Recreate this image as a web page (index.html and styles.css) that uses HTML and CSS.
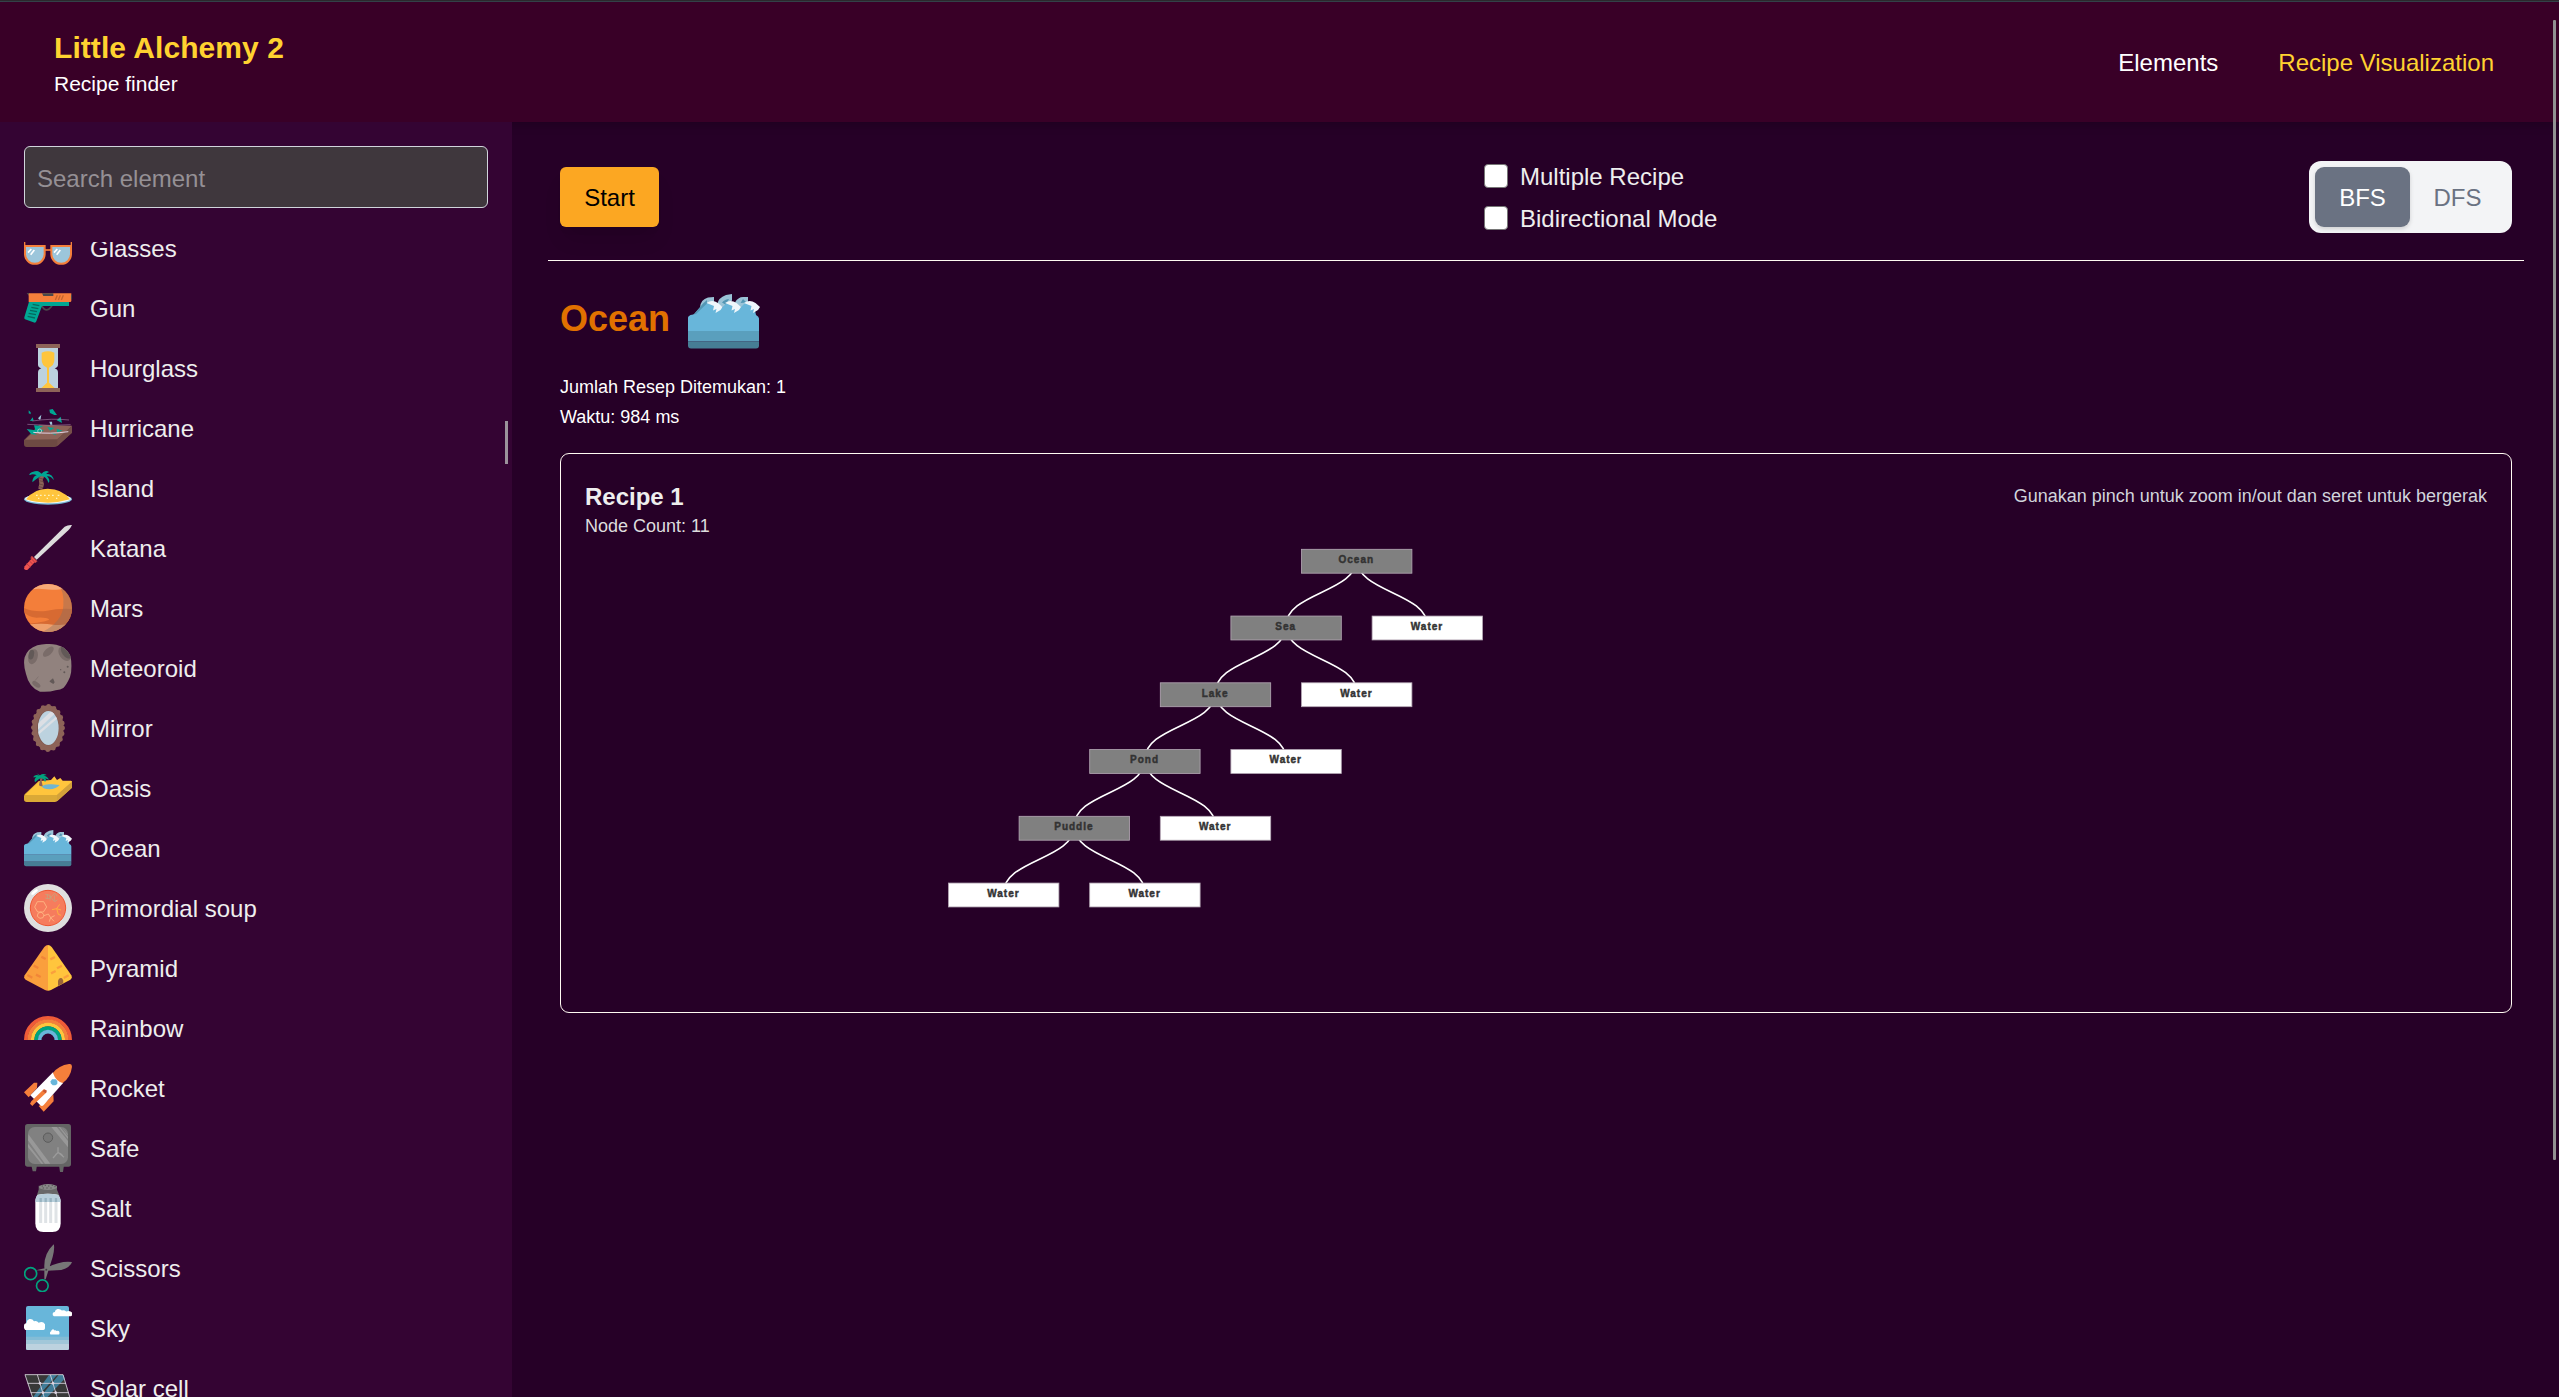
FILE: index.html
```html
<!DOCTYPE html>
<html lang="en">
<head>
<meta charset="utf-8">
<title>Little Alchemy 2 - Recipe finder</title>
<link rel="stylesheet" href="styles.css">
</head>
<body>
<div class="page">
<header class="header">
  <div class="brand">
    <div class="brand-title">Little Alchemy 2</div>
    <div class="brand-sub">Recipe finder</div>
  </div>
  <nav class="nav"><a>Elements</a><a class="current">Recipe Visualization</a></nav>
</header>
<div class="body">
  <aside class="sidebar">
    <input class="search" type="text" placeholder="Search element">
    <div class="list-view">
    <ul class="list">
      <li><svg viewBox="0 0 144 144"><path d="M2 34V84M142 34V84" stroke="#f57f3b" stroke-width="4"/><path d="M3 66H62V90A29 29 0 0 1 3 90ZM82 66H141V90A29 29 0 0 1 82 90Z" fill="#9cc6db" stroke="#f57f3b" stroke-width="6"/><path d="M62 78H82" stroke="#f57f3b" stroke-width="5"/><path d="M12 86L22 75M20 92L31 78M90 86L100 75M98 92L109 78" stroke="#fff" stroke-width="5"/></svg>Glasses</li>
      <li><svg viewBox="0 0 144 144"><path d="M48 56Q60 84 74 76L84 66" fill="none" stroke="#4a494b" stroke-width="5"/><path d="M8 27H18V40Z" fill="#4a494b"/><path d="M15 53H135V66H54L37 112Q35 118 28 115L3 106Q0 104 1 100Z" fill="#00a693"/><path d="M14 30Q14 28 18 28H142V50Q142 54 138 54H14Z" fill="#f57f3b"/><path d="M54 28H88V36H58ZM141 32H144V46H141Z" fill="#4a494b"/><path d="M94 48L100 34M103 48L109 34M112 48L118 34" stroke="#c4652f" stroke-width="4"/><path d="M26 61L46 65M22 70L43 74M18 79L39 83M14 88L36 92M11 97L33 102" stroke="#04695f" stroke-width="4"/></svg>Gun</li>
      <li><svg viewBox="0 0 144 144"><path d="M42 10H102V62Q102 70 92 73Q102 76 102 86V134H42V86Q42 76 52 73Q42 70 42 62Z" fill="#bcd2df"/><path d="M53 26Q72 18 91 26V48Q91 64 75 71V116L92 132H52L69 116V71Q53 64 53 48Z" fill="#ffc53d"/><path d="M36 0H108V12H36ZM36 132H108V144H36Z" fill="#8d6358"/></svg>Hourglass</li>
      <li><svg viewBox="0 0 144 144"><path d="M0 108L46 62L144 66V86L100 126Q96 129 90 129H8Q0 129 0 120Z" fill="#6d4a43"/><path d="M3 107L48 65H144L100 106Z" fill="#8d6358"/><path d="M100 106L144 68V86L100 126Z" fill="#765049"/><path d="M14 19L20 25V31L14 28ZM76 17L86 15L99 33L91 33L78 27ZM18 51L26 40L29 50ZM98 49L110 38L114 57ZM30 64L58 66L46 72L60 81L30 86L39 92L22 91L8 75L34 79ZM70 69L91 72L78 80ZM98 74L116 80L99 85ZM79 87L94 89L96 94Z" fill="#00a693"/><path d="M48 48L42 43L52 32L50 44ZM76 53H84L85 62H79Z" fill="#9cc6db"/><path d="M25 51Q85 42 135 48M10 61Q80 67 140 62" fill="none" stroke="#b898bd" stroke-width="1.500"/><path d="M28 85Q77 91 133 83" fill="none" stroke="#e2d1e4" stroke-width="3"/><circle cx="47" cy="81" r="6" fill="none" stroke="#ddd" stroke-width="2"/></svg>Hurricane</li>
      <li><svg viewBox="0 0 144 144"><ellipse cx="72" cy="106" rx="72" ry="16" fill="#73b5d3"/><ellipse cx="72" cy="104" rx="69" ry="14" fill="#f1f8fb"/><path d="M6 106Q29 74 71 74Q115 74 138 106Q105 116 72 116Q36 116 6 106Z" fill="#ffc53d"/><path d="M50 35L61 37L56 48L60 60L57 73Q50 78 43 74L46 58L44 43Z" fill="#8d6358"/><path d="M44 42L57 45M46 50L58 53M45 60L59 63M44 68L57 71" stroke="#6e4b43" stroke-width="3"/><path d="M53 29Q32 15 15 33Q29 28 38 34Q26 37 25 55Q36 45 50 37Q65 33 74 57Q80 48 69 37Q81 35 89 49Q88 30 66 29Q73 22 76 25Q64 16 53 29Q43 18 30 23Z" fill="#00a693"/><path d="M53 29Q40 20 15 33Q20 21 42 22ZM53 29Q60 20 76 25Q70 25 66 29Z" fill="#00a693"/><path d="M36 94h5M48 94h5M60 94h5M72 94h5M84 94h5M101 94h5M42 103h4M68 103h4M96 103h4" stroke="#fff3bf" stroke-width="4"/></svg>Island</li>
      <li><svg viewBox="0 0 144 144"><path d="M30 99L122 8Q132 2 144 3Q140 12 133 19L38 107Z" fill="#dcdcdc"/><path d="M25 101L35 112L11 137Q4 140 0 134L2 127Z" fill="#ef5350"/><path d="M22 98Q25 96 28 101L39 112L33 116L21 103ZM16 111L26 120M8 119L19 129" fill="#ef5350" stroke="#b83e45" stroke-width="3"/></svg>Katana</li>
      <li><svg viewBox="0 0 144 144"><clipPath id="mc"><circle cx="72" cy="72" r="72"/></clipPath><g clip-path="url(#mc)"><path d="M0 0H144V144H0Z" fill="#f37e3a"/><path d="M0 22Q30 11 64 16Q93 20 144 11V0H0Z" fill="#f7a977"/><path d="M0 72Q27 84 65 81Q107 72 144 75V120Q91 130 10 120Q78 112 75 106Q67 99 37 101Q10 98 0 84Z" fill="#d76a32"/><path d="M7 122Q55 116 87 122Q112 126 144 118V144H0Z" fill="#efa06c"/><path d="M101 0Q121 20 118 65Q115 113 55 144H144V0Z" fill="#877063" opacity=".4"/></g></svg>Mars</li>
      <li><svg viewBox="0 0 144 144"><clipPath id="rc"><path d="M40 4Q65-3 97 2Q126 8 138 33Q148 66 138 99Q128 122 118 132Q110 138 95 139Q75 145 48 143Q15 131 6 90Q-3 61 2 40Q11 13 40 4Z"/></clipPath><g clip-path="url(#rc)"><path d="M0 0H144V144H0Z" fill="#91827e"/><ellipse cx="27" cy="38" rx="14" ry="23" transform="rotate(16 27 38)" fill="#7a6c69"/><ellipse cx="22" cy="32" rx="8" ry="15" transform="rotate(12 22 32)" fill="#625957"/><ellipse cx="73" cy="23" rx="20" ry="10" transform="rotate(-42 73 23)" fill="#7a6c69"/><ellipse cx="122" cy="29" rx="16" ry="24" transform="rotate(-35 122 29)" fill="#7a6c69"/><ellipse cx="127" cy="24" rx="13" ry="22" transform="rotate(-35 127 24)" fill="#625957"/><ellipse cx="37" cy="121" rx="7" ry="14" transform="rotate(-55 37 121)" fill="#7a6c69"/><path d="M77 111L87 103L92 115L88 120L77 113Z" fill="#625957"/><circle cx="110" cy="77" r="2" fill="#625957"/><circle cx="121" cy="85" r="3" fill="#625957"/><circle cx="131" cy="68" r="3" fill="#625957"/><path d="M33 110L43 98" stroke="#7a6c69" stroke-width="2"/></g></svg>Meteoroid</li>
      <li><svg viewBox="0 0 144 144"><ellipse cx="72" cy="72" rx="47" ry="68" fill="#8d6358"/><ellipse cx="72" cy="72" rx="44" ry="65" fill="none" stroke="#8d6358" stroke-width="14" stroke-linecap="round" stroke-dasharray="0 17.3"/><ellipse cx="72" cy="72" rx="33" ry="52" fill="#7b554c"/><clipPath id="mi"><ellipse cx="73" cy="72" rx="31" ry="51"/></clipPath><g clip-path="url(#mi)"><path d="M40 18H105V125H40Z" fill="#bcd2df"/><path d="M34 75L95 18" stroke="#dcdfe4" stroke-width="13"/><path d="M36 94L110 30" stroke="#dcdfe4" stroke-width="7"/></g></svg>Mirror</li>
      <li><svg viewBox="0 0 144 144"><path d="M2 91L44 51L144 52V71L101 110Q97 114 91 114H8Q0 114 0 106V96Z" fill="#dba936"/><path d="M3 93L47 51L81 48L91 37L99 48L109 42L116 50H141L144 53L99 93Z" fill="#ffc53d"/><path d="M99 93L144 53V71L99 112Z" fill="#d3a13a"/><path d="M53 67Q63 59 84 61L107 63Q97 75 76 76Q58 76 53 67Z" fill="#70b5d0"/><path d="M49 42L57 43L53 52L56 66Q50 68 45 64Z" fill="#8d6358"/><path d="M47 36Q35 29 27 40L37 40Q29 45 33 55Q44 45 51 42Q60 44 63 54Q70 45 61 42L75 47Q69 35 58 35L68 33Q57 27 48 34L37 28Z" fill="#00a37e"/></svg>Oasis</li>
      <li><svg viewBox="0 0 144 144"><g id="ocean"><path d="M8 45L24 27Q25 11 40 7L52 6V17L36 45Z M59 20Q60 8 76 2L88 0V13L74 30Z M94 17Q100 6 110 6H120V22L105 28Z" transform="translate(0 18)" fill="#9ac3d7"/><path d="M8 63L30 37L38 30V42L20 62ZM68 35Q74 28 82 28L76 40ZM105 36L110 28L117 35Z" fill="#5397b5"/><path d="M0 65Q0 62 5 60L16 58L39 36H56L68 45L78 36H96L105 45L115 35L131 38L136 60Q142 63 142 67V92H0Z" fill="#68b6da"/><path d="M0 92H142V113H0Z" fill="#5a9fbd"/><path d="M0 113H142V121Q142 127 136 127H6Q0 127 0 121Z" fill="#467d95"/><path id="crest" d="M37 36Q48 28 60 36L69 44L65 50L55 56L57 48L50 51L52 42Z" fill="#eff6fb"/><use href="#crest" x="37"/><use href="#crest" x="75"/></g></svg>Ocean</li>
      <li><svg viewBox="0 0 144 144"><circle cx="72" cy="72" r="72" fill="#dfdfdf"/><path d="M21 31Q25 20 39 15L42 20L27 33Z" fill="#fff"/><circle cx="72" cy="72" r="53" fill="#f67c5d" stroke="#ef5732" stroke-width="3"/><g fill="none" stroke="#ffba86" stroke-width="2.5"><path d="M40 53H59L68 69L58 84H41L32 69ZM51 84L60 92L57 101L48 103L40 97L42 88ZM60 95L73 90L80 101L92 95M80 101L76 113M80 101L90 112"/><path d="M84 77L98 74L107 61M98 74L111 78M98 74L103 91L111 94" stroke="#ffb83b"/><path d="M64 31Q76 29 84 44T100 47M64 42Q76 49 85 35T99 37M70 31V45M78 31V50M91 34V50" stroke="#c4a27e"/></g></svg>Primordial soup</li>
      <li><svg viewBox="0 0 144 144"><path d="M72 3Q78 3 83 9L142 94Q146 103 139 107L81 138Q77 140 72 140Z" fill="#ffc53d"/><path d="M72 3Q66 3 61 9L2 94Q-2 103 5 107L63 138Q67 140 72 140Z" fill="#fa9f3d"/><g stroke-width="7"><path d="M52 38L65 45M29 65L43 72M10 93L25 101M36 92L50 99" stroke="#f18638"/><path d="M79 46L93 39M99 73L114 65M81 88L95 81M119 102L134 94" stroke="#fa9f3d"/></g><path d="M102 126V110Q105 99 114 103Q119 107 118 118Z" fill="#9b6538"/></svg>Pyramid</li>
      <li><svg viewBox="0 0 144 144"><g fill="none" stroke-width="11"><path d="M5.500 108A66.500 66.500 0 0 1 138.500 108" stroke="#ef5b38"/><path d="M15.500 108A56.500 56.500 0 0 1 128.500 108" stroke="#f57f3b"/><path d="M26 108A46 46 0 0 1 118 108" stroke="#ffc53d"/><path d="M36.500 108A35.500 35.500 0 0 1 107.500 108" stroke="#00a47e"/><path d="M47 108A25 25 0 0 1 97 108" stroke="#68b6da"/></g></svg>Rainbow</li>
      <li><svg viewBox="0 0 144 144"><path d="M40 56H30L0 85L14 100L39 72ZM88 91L89 112L59 143L44 126L70 110Z" fill="#f57f3b"/><path d="M87 25L19 94L49 124Q54 128 59 123L118 56Z" fill="#fff"/><path d="M87 27Q104 4 135 0Q144-1 144 8Q140 40 116 57Q95 51 87 27Z" fill="#f57f3b"/><path d="M80 52L84 46H95L100 51V60L94 64H86L80 58Z" fill="#68b6da"/><path d="M59 76L68 85L30 121L25 126L18 119L22 112Z" fill="#f57f3b"/><path d="M56 82L61 76L69 80L65 88Z" fill="#c95632"/></svg>Rocket</li>
      <li><svg viewBox="0 0 144 144"><path d="M22 124H39L36 142H26ZM105 124H120L117 144H108Z" fill="#646464"/><rect x="3" y="0" width="138" height="128" rx="8" fill="#646464"/><rect x="12" y="9" width="120" height="111" rx="20" fill="#818181"/><path d="M13 31L79 119H63L12 49ZM12 59L58 119H52L12 70ZM82 9H98L132 51V70ZM104 9H108L132 38V45ZM114 10L131 30V34Z" fill="#989898"/><circle cx="72" cy="41" r="14" fill="#777" stroke="#5c5c5c" stroke-width="3"/><path d="M102 70V85L87 102M102 85L120 100M92 96Q102 78 116 95" stroke="#9b9b9b" fill="none" stroke-width="4"/></svg>Safe</li>
      <li><svg viewBox="0 0 144 144"><path d="M44 5H99V17L107 36H38L44 17Z" fill="#686868"/><ellipse cx="72" cy="9" rx="27" ry="9" fill="#888"/><path d="M53 6h4M62 4h4M72 6h4M83 4h4M91 8h4M56 12h4M67 12h4M79 12h4" stroke="#555" stroke-width="3"/><path d="M42 32Q72 27 101 32Q110 39 110 55V118Q110 144 85 144H58Q34 144 34 118V55Q34 39 42 32Z" fill="#fff"/><path d="M42 32Q72 27 101 32Q110 39 110 54H34Q34 38 42 32Z" fill="#b8cfdb"/><path d="M50 54V117M65 54V117M80 54V117M96 54V117" stroke="#dfe3e6" stroke-width="9"/><path d="M50 42V54M65 42V54M80 42V54M96 42V54" stroke="#96b2bf" stroke-width="7"/></svg>Salt</li>
      <li><svg viewBox="0 0 144 144"><path d="M61 106L61 70Q59 30 89 1Q93 10 86 39L65 106ZM36 79L68 71Q113 49 144 54Q140 69 112 78L70 80Z" fill="#777"/><circle cx="20" cy="89" r="18" fill="none" stroke="#00a47e" stroke-width="5"/><circle cx="55" cy="125" r="17.500" fill="none" stroke="#00a47e" stroke-width="5"/><circle cx="67" cy="77" r="3" fill="#443d45"/></svg>Scissors</li>
      <li><svg viewBox="0 0 144 144"><rect x="6" y="6" width="129" height="132" rx="6" fill="#68b6da"/><path d="M6 98H135V132Q135 138 129 138H12Q6 138 6 132Z" fill="#83bcd6"/><path d="M6 108H135V132Q135 138 129 138H12Q6 138 6 132Z" fill="#a1c7d9"/><path d="M6 120H135V132Q135 138 129 138H12Q6 138 6 132Z" fill="#bcd2df"/><g fill="#fff"><path id="cl" d="M4 78Q-1 75 0 66Q0 58 7 58Q8 48 16 45Q25 43 30 52Q38 48 44 56Q57 50 63 61V73Q63 78 58 78Z"/><use href="#cl" transform="translate(86 -14) scale(.92 .65)"/><use href="#cl" transform="translate(78 55) scale(.45 .47)"/></g></svg>Sky</li>
      <li><svg viewBox="0 0 144 144"><path d="M2 31H118L144 120H30Z" fill="#383838"/><path d="M75 33H99L36 104H24ZM104 33H119L122 44L66 104H44Z" fill="#407c98"/><path d="M3 32H117L143 118M3 32L32 118M40 32L66 118M79 32L105 118M11 58H126M20 86H134" fill="none" stroke="#ddd5e2" stroke-width="2.500"/><g fill="#ddd5e2"><circle cx="48" cy="58" r="4"/><circle cx="87" cy="58" r="4"/><circle cx="57" cy="86" r="4"/><circle cx="95" cy="86" r="4"/></g></svg>Solar cell</li>
    </ul>
    </div>
    <div class="side-thumb"></div>
  </aside>
  <main class="main">
    <div class="toolbar">
      <button class="start">Start</button>
      <div class="checks">
        <label><input type="checkbox">Multiple Recipe</label>
        <label><input type="checkbox">Bidirectional Mode</label>
      </div>
      <div class="toggle"><button class="active">BFS</button><button>DFS</button></div>
    </div>
    <div class="result">
      <div class="result-title"><h1>Ocean</h1><svg viewBox="0 0 144 144"><use href="#ocean"/></svg></div>
      <div class="stats"><p>Jumlah Resep Ditemukan: 1</p><p>Waktu: 984 ms</p></div>
      <section class="card">
        <div class="card-head">
          <div><h2>Recipe 1</h2><p class="count">Node Count: 11</p></div>
          <p class="hint">Gunakan pinch untuk zoom in/out dan seret untuk bergerak</p>
        </div>
        <svg class="tree" viewBox="0 0 1902 450">
          <defs>
            <g id="fork"><path d="M0 10C0 43.400-70.600 43.400-70.600 76.750M0 10C0 43.400 70.600 43.400 70.600 76.750"/></g>
            <rect id="box" x="-55.200" y="0.300" width="110.400" height="23.900"/>
          </defs>
          <g class="links">
            <use href="#fork" x="771.700" y="11"/><use href="#fork" x="701.100" y="77.750"/><use href="#fork" x="630.500" y="144.500"/><use href="#fork" x="559.900" y="211.250"/><use href="#fork" x="489.300" y="278"/>
          </g>
          <g class="node mix">
            <use href="#box" x="771.700" y="11"/><text x="771.300" y="25.300">Ocean</text>
            <use href="#box" x="701.100" y="77.750"/><text x="700.700" y="92.300">Sea</text>
            <use href="#box" x="630.500" y="144.500"/><text x="630.100" y="158.500">Lake</text>
            <use href="#box" x="559.900" y="211.250"/><text x="559.500" y="225.300">Pond</text>
            <use href="#box" x="489.300" y="278"/><text x="488.900" y="292.300">Puddle</text>
          </g>
          <g class="node leaf">
            <use href="#box" x="842.300" y="77.750"/><text x="842" y="92.300">Water</text>
            <use href="#box" x="771.700" y="144.500"/><text x="771.400" y="158.500">Water</text>
            <use href="#box" x="701.100" y="211.250"/><text x="700.800" y="225.300">Water</text>
            <use href="#box" x="630.500" y="278"/><text x="630.200" y="292.300">Water</text>
            <use href="#box" x="559.900" y="344.750"/><text x="559.600" y="358.500">Water</text>
            <use href="#box" x="418.700" y="344.750"/><text x="418.400" y="358.500">Water</text>
          </g>
        </svg>
      </section>
    </div>
  </main>
</div>
<div class="page-thumb"></div>
</div>
</body>
</html>
```
FILE: styles.css
```css
* { box-sizing: border-box; margin: 0; padding: 0; }
html, body { height: 100%; overflow: hidden; }
body {
  background: #260027;
  border-top: 1px solid #2b282d;
  color: #fff;
  font: 24px/36px "Liberation Sans", Arial, sans-serif;
}
.page { height: 100%; display: flex; flex-direction: column; border-top: 1px solid #35424a; }
.header {
  height: 120px;
  flex: none;
  display: flex;
  justify-content: space-between;
  align-items: flex-start;
  padding: 25px 65px 23px 54px;
  background: #390027;
  box-shadow: 0 6px 9px -1px rgba(0, 0, 0, .1), 0 3px 6px -2px rgba(0, 0, 0, .1);
}
.brand-title { font-size: 30px; line-height: 42px; font-weight: bold; letter-spacing: .06px; color: #ffd230; }
.brand-sub { font-size: 21px; line-height: 30px; }
.nav { display: flex; gap: 60px; padding-top: 18px; }
.nav .current { color: #ffd230; }

.body { flex: 1; min-height: 0; display: flex; }
.sidebar {
  position: relative;
  width: 512px;
  flex: none;
  padding: 24px 24px 0;
  background: #340433;
  display: flex;
  flex-direction: column;
  gap: 34px;
}
.search {
  flex: none;
  height: 62px;
  padding: 14px 12px 10px;
  border: 1px solid #d1d5dc;
  border-radius: 6px;
  background: #3f373d;
  color: #fff;
  font: inherit;
}
.search::placeholder { color: #959095; }
.list-view { flex: 1; min-height: 0; overflow: hidden; }
.list { list-style: none; margin-top: -24px; color: #eee; }
.list li { height: 60px; padding-top: 2px; display: flex; align-items: center; gap: 18px; }
.list svg { width: 48px; height: 48px; margin-bottom: 2px; flex: none; }
.side-thumb { position: absolute; right: 4px; top: 299px; width: 3px; height: 43px; background: #9b939b; }
.page-thumb { position: absolute; right: 3px; top: 20px; width: 3px; height: 1140px; background: #929092; border-radius: 1px; }

.main { flex: 1; padding: 24px 35px 0 36px; }
.toolbar {
  display: flex;
  align-items: center;
  height: 115px;
  padding: 6px 12px 18px;
  border-bottom: 1px solid #fffaf2;
}
button { border: 0; font: inherit; background: none; padding-top: 2px; }
.start {
  height: 60px;
  width: 99px;
  border-radius: 6px;
  background: #fca722;
  color: #000;
  box-shadow: 0 15px 22px -5px rgba(0, 0, 0, .1), 0 6px 9px -6px rgba(0, 0, 0, .1);
}
.checks { margin-left: 825px; display: flex; flex-direction: column; gap: 6px; color: #eee; }
.checks label { height: 36px; padding-top: 2px; display: flex; align-items: center; gap: 12px; }
.checks input {
  appearance: none;
  width: 24px;
  height: 24px;
  margin-bottom: 2px;
  border: 1px solid #767676;
  border-radius: 4px;
  background: #fff;
}
.toggle { margin-left: auto; width: 203px; height: 72px; padding: 6px; border-radius: 12px; background: #f3f4f6; display: flex; }
.toggle button { width: 95px; height: 60px; border-radius: 9px; color: #6a7282; }
.toggle .active { background: #6a7282; color: #fff; box-shadow: 0 2px 4px rgba(0, 0, 0, .15); }

.result { padding: 24px 12px 0; }
.result-title { display: flex; align-items: center; gap: 18px; }
.result-title h1 { font-size: 36px; line-height: 48px; padding-bottom: 5px; color: #e17100; }
.result-title svg { width: 72px; height: 72px; }
.stats { display: flex; flex-direction: column; gap: 6px; margin-top: 18px; font-size: 18px; line-height: 24px; }
.card { height: 560px; margin-top: 24px; padding: 24px; border: 1px solid #fffaf2; border-radius: 9px; }
.card-head { display: flex; justify-content: space-between; }
.card h2 { font-size: 24px; line-height: 38px; margin-bottom: -2px; color: #eee; }
.count { font-size: 18px; line-height: 24px; color: #ddd; }
.hint { font-size: 18px; color: #d1d5dc; }
.tree { display: block; width: 1902px; height: 450px; }
.links { fill: none; stroke: #fff; stroke-width: 1.6; }
.node { stroke: #b5a8b5; stroke-width: .8; }
.node text { font-size: 10px; font-weight: bold; letter-spacing: 1px; text-anchor: middle; fill: #333; stroke: #333; stroke-width: .45; }
.mix use { fill: #808080; }
.leaf use { fill: #fff; }
```
